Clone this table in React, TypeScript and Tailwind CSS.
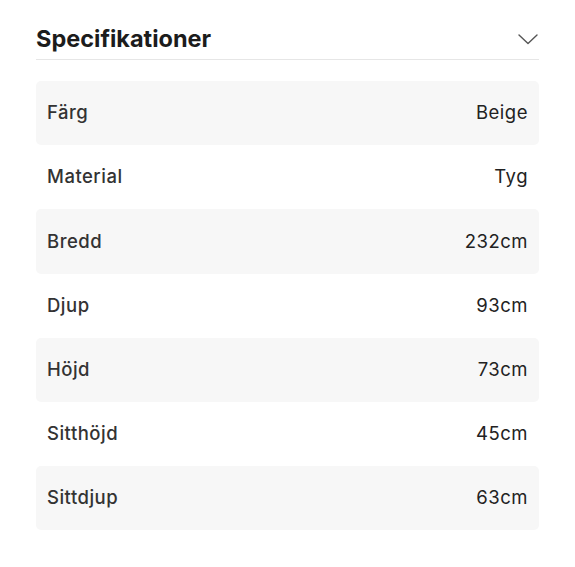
const specs = [
  { label: 'Färg', value: 'Beige' },
  { label: 'Material', value: 'Tyg' },
  { label: 'Bredd', value: '232cm' },
  { label: 'Djup', value: '93cm' },
  { label: 'Höjd', value: '73cm' },
  { label: 'Sitthöjd', value: '45cm' },
  { label: 'Sittdjup', value: '63cm' },
];

export default function App() {
  return (
    <div className="min-h-screen bg-white px-[36px] pt-[19px] font-['Inter',sans-serif]">
      <div className="flex h-[41px] items-center justify-between border-b border-[#e6e6e6]">
        <h2 className="text-[23.5px] font-bold text-[#1c1c1c]">Specifikationer</h2>
        <svg width="20" height="11" viewBox="0 0 20 11" className="mr-[1px] text-[#555]" fill="none">
          <polyline points="1,1 10,9.5 19,1" stroke="currentColor" strokeWidth="1.4" strokeLinecap="round" strokeLinejoin="round" />
        </svg>
      </div>
      <div className="mt-[21px]">
        {specs.map((spec, index) => (
          <div
            key={spec.label}
            className={`flex h-[64.2px] items-center justify-between rounded-[5px] px-[11px] text-[18.5px] tracking-[0.5px] ${
              index % 2 === 0 ? 'bg-[#f7f7f7]' : 'bg-white'
            }`}
          >
            <span className="font-medium text-[#333]">{spec.label}</span>
            <span className="text-[#222]">{spec.value}</span>
          </div>
        ))}
      </div>
    </div>
  );
}
